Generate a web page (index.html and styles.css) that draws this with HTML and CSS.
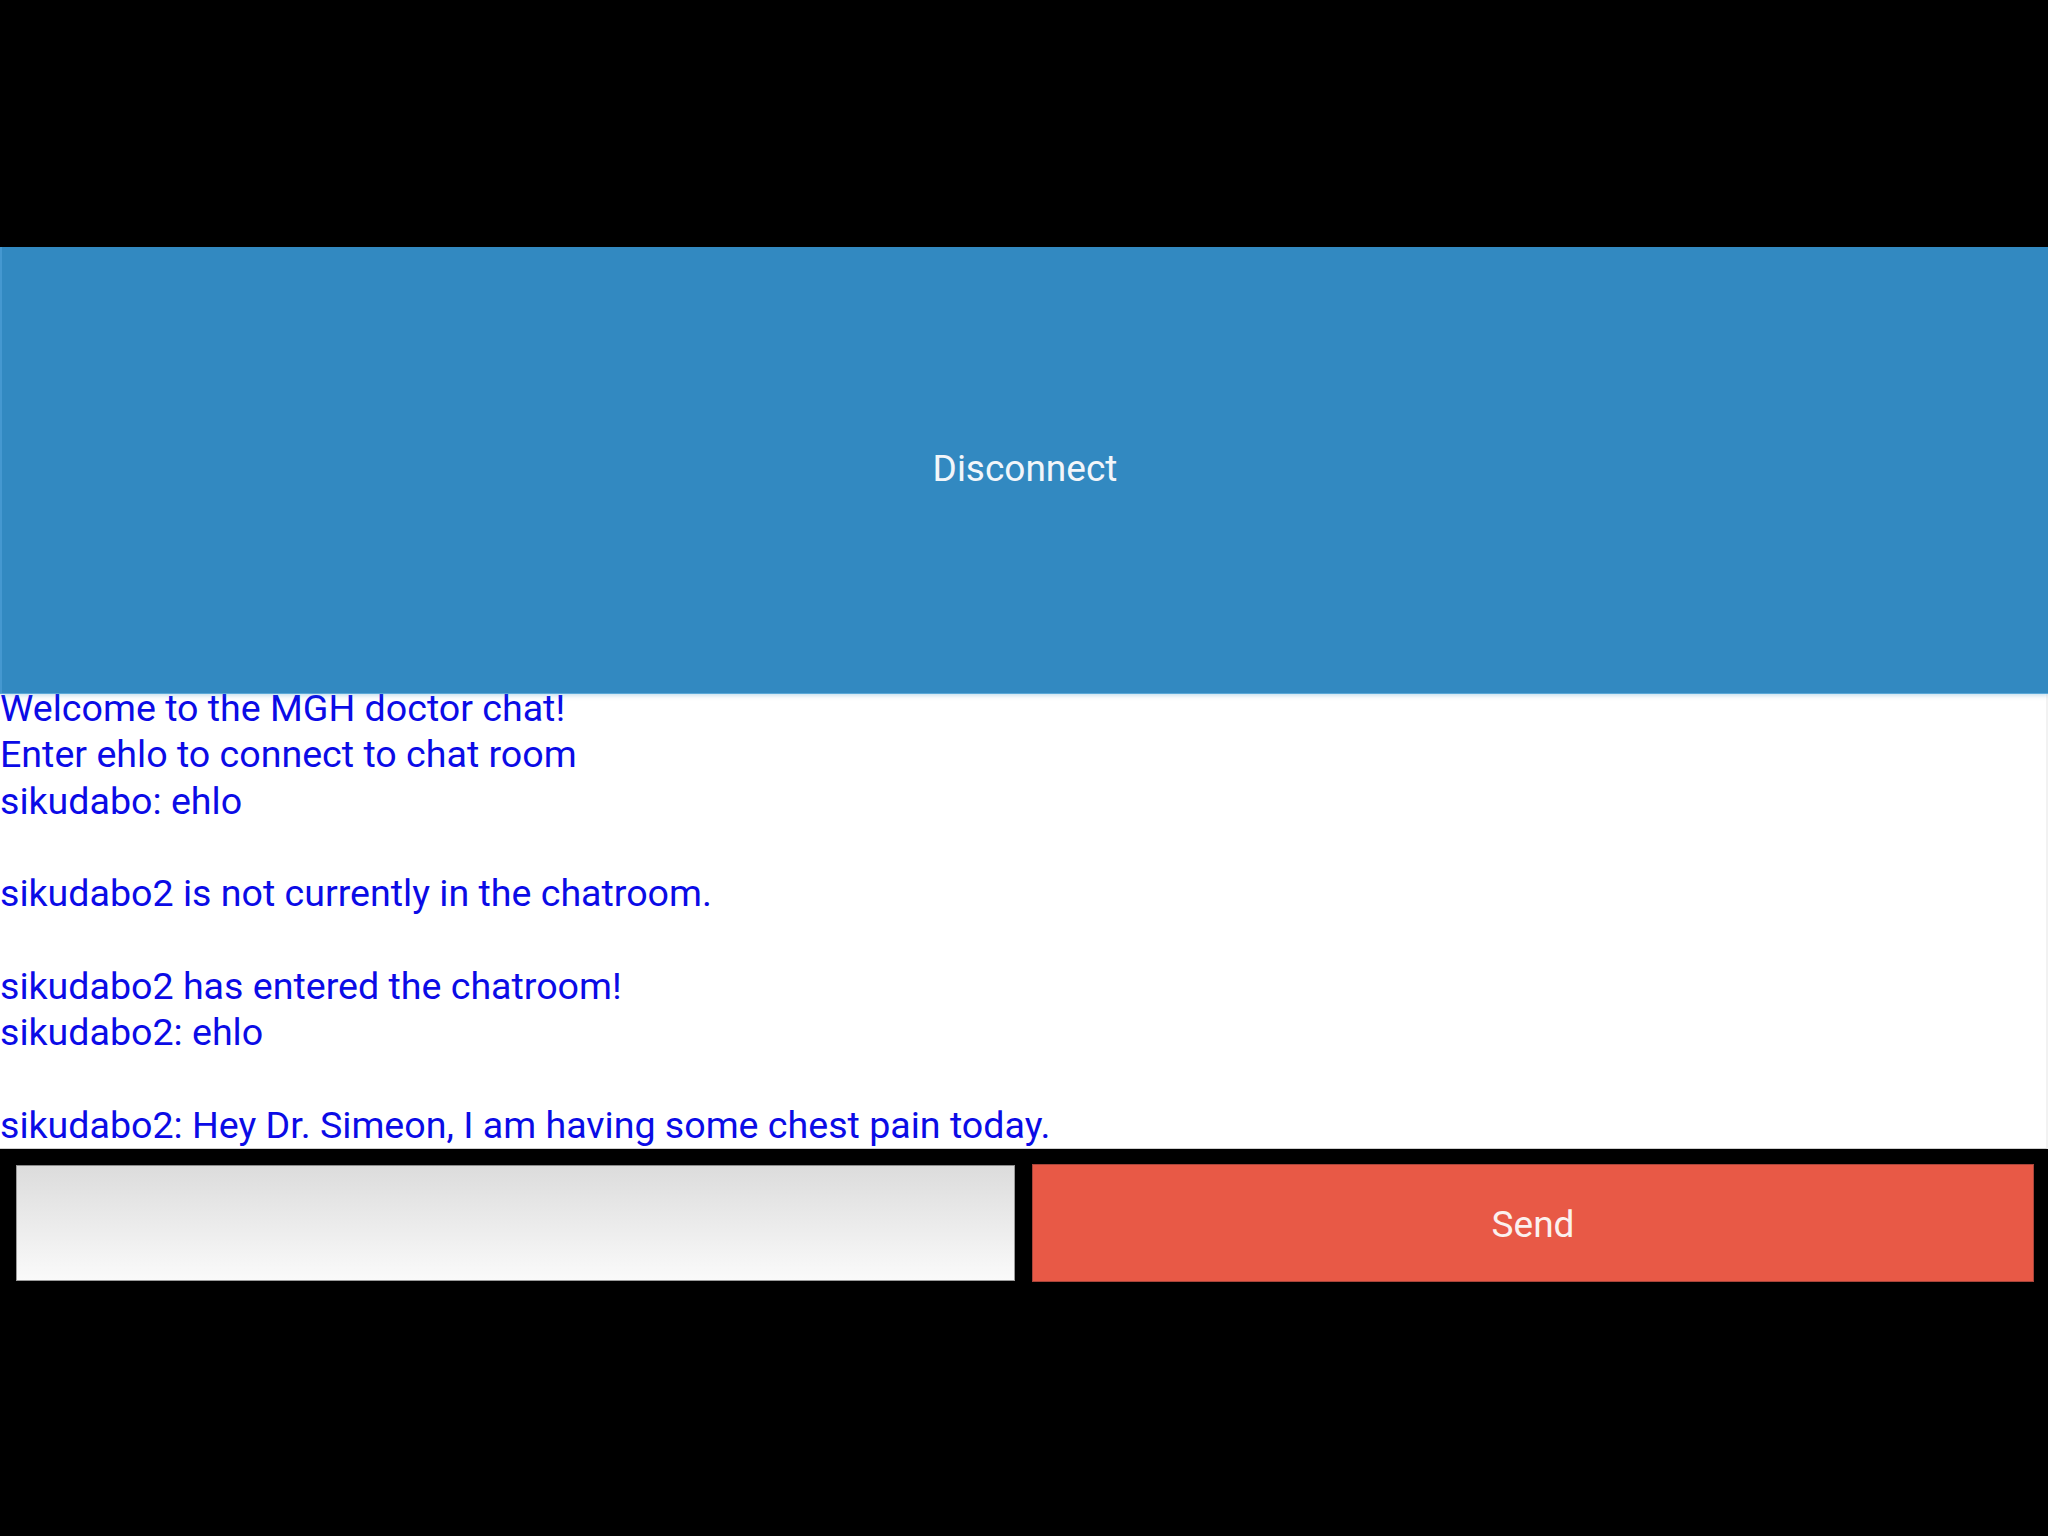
FILE: index.html
```html
<!DOCTYPE html>
<html lang="en">
<head>
<meta charset="utf-8">
<title>MGH doctor chat</title>
<link rel="stylesheet" href="styles.css">
</head>
<body>
<div class="app">
  <div class="topspace"></div>
  <button class="disconnect" type="button">Disconnect</button>
  <div class="chat">
    <div class="log">
      <div class="line">Welcome to the MGH doctor chat!</div>
      <div class="line">Enter ehlo to connect to chat room</div>
      <div class="line">sikudabo: ehlo</div>
      <div class="line">&nbsp;</div>
      <div class="line">sikudabo2 is not currently in the chatroom.</div>
      <div class="line">&nbsp;</div>
      <div class="line">sikudabo2 has entered the chatroom!</div>
      <div class="line">sikudabo2: ehlo</div>
      <div class="line">&nbsp;</div>
      <div class="line">sikudabo2: Hey Dr. Simeon, I am having some chest pain today.</div>
    </div>
  </div>
  <div class="composer">
    <input class="msg" type="text" aria-label="Message">
    <button class="send" type="button">Send</button>
  </div>
</div>
</body>
</html>
```

FILE: styles.css
```css
html, body {
  margin: 0;
  padding: 0;
  background: #000;
}
body {
  width: 2048px;
  height: 1536px;
  overflow: hidden;
  font-family: Roboto, "Liberation Sans", sans-serif;
}
.app {
  display: flex;
  flex-direction: column;
  width: 2048px;
}
.topspace {
  height: 247px;
  background: #000;
}
.disconnect {
  position: relative;
  z-index: 2;
  height: 446px;
  margin: 0;
  border: 0;
  border-left: 2px solid #4598d0;
  background: #3289c1;
  color: #f2f6fa;
  font-family: Roboto, "Liberation Sans", sans-serif;
  font-size: 37px;
  box-shadow: 0 1px 0 #5aa8d8, 0 3px 4px rgba(50, 137, 193, 0.25);
  padding: 0 0 4px 0;
}
.chat {
  height: 456px;
  background: #fff;
  overflow: hidden;
  display: flex;
  flex-direction: column;
  justify-content: flex-end;
  padding-bottom: 0;
  box-sizing: border-box;
  border-bottom: 1px solid #cfcfcf;
  border-right: 2px solid #f2f2f2;
}
.log {
  flex: none;
}
.line {
  font-size: 37.6px;
  line-height: 46.3px;
  color: #0b0be6;
  white-space: pre;
}
.composer {
  display: flex;
  gap: 17px;
  padding: 16px 14px 0 16px;
  height: 134px;
  box-sizing: border-box;
}
.msg {
  flex: 0 0 999px;
  height: 116px;
  margin: 0;
  box-sizing: border-box;
  border: 1px solid #9a9a9a;
  border-top-color: #8a8a8a;
  background: linear-gradient(#dcdcdc, #fafafa);
  font-size: 37px;
  font-family: Roboto, "Liberation Sans", sans-serif;
  outline: none;
}
.send {
  flex: 0 0 1002px;
  height: 118px;
  margin: -1px 0 0 0;
  box-sizing: border-box;
  border: 1px solid #a8443a;
  background: #e85946;
  color: #fbf1ef;
  font-family: Roboto, "Liberation Sans", sans-serif;
  font-size: 37px;
  padding: 2px 0 0 0;
}
```
